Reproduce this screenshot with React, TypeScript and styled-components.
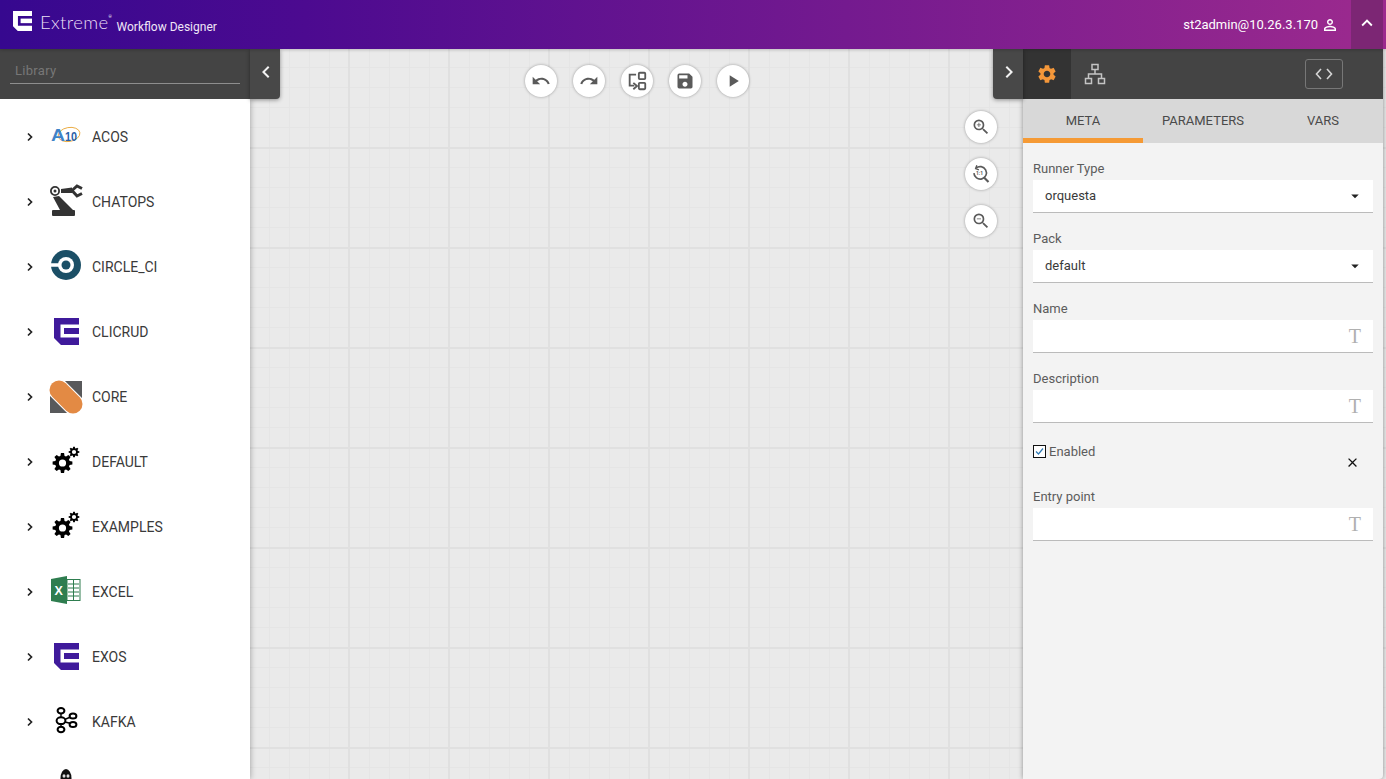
import React from 'react';
import styled, { createGlobalStyle } from 'styled-components';
import {
  MdArrowDropDown,
  MdChevronLeft,
  MdChevronRight,
  MdClose,
  MdExpandLess,
  MdPersonOutline,
  MdPlayArrow,
  MdRedo,
  MdSave,
  MdSettings,
  MdUndo,
  MdZoomIn,
  MdZoomOut,
} from 'react-icons/md';

const GlobalStyle = createGlobalStyle`
  html, body {
    margin: 0;
    height: 100%;
    overflow: hidden;
    font-family: Roboto, "Liberation Sans", sans-serif;
  }
  * { box-sizing: border-box; }
`;

const Page = styled.div`
  display: flex;
  flex-direction: column;
  height: 100vh;
  overflow: hidden;
`;

const Header = styled.header`
  position: relative;
  z-index: 5;
  flex: 0 0 49px;
  display: flex;
  align-items: center;
  padding: 0 3px 0 13px;
  color: #fff;
  background: linear-gradient(90deg, #36088f 0%, #4c0a90 22%, #9c2a8e 100%);
  box-shadow: 0 1px 3px rgba(0, 0, 0, 0.2);
`;

const Brand = styled.div`
  display: flex;
  align-items: flex-start;
  flex: 1;
  height: 21px;
  margin-top: -7px;
`;

const BrandName = styled.span`
  margin-left: 8px;
  font-family: Lato, sans-serif;
  font-size: 18.5px;
  font-weight: 300;
  line-height: 22px;
  letter-spacing: 0.35px;
  color: #eadff5;
`;

const BrandMark = styled.sup`
  margin-top: 4px;
  font-size: 4px;
  line-height: 4px;
`;

const AppName = styled.span`
  margin: 8px 0 0 5px;
  font-size: 12px;
  line-height: 17px;
  color: #f0e6f6;
  white-space: nowrap;
`;

const User = styled.div`
  display: flex;
  align-items: center;
  gap: 3px;
  margin-right: 12px;
  font-size: 13px;
  color: #fff;
  svg { font-size: 18px; }
`;

const Collapse = styled.button`
  display: flex;
  align-items: center;
  justify-content: center;
  width: 32px;
  height: 49px;
  padding: 0 0 4px;
  border: 0;
  color: #fff;
  font-size: 22px;
  background: #7c2674;
`;

const Workspace = styled.main`
  flex: 1;
  min-height: 0;
  display: flex;
  background-color: #eaeaea;
  background-image:
    linear-gradient(90deg, #e0e0e0 2px, transparent 2px),
    linear-gradient(0deg, #e0e0e0 2px, transparent 2px),
    linear-gradient(90deg, #e5e5e5 1px, transparent 1px),
    linear-gradient(0deg, #e5e5e5 1px, transparent 1px);
  background-size: 100px 100px, 100px 100px, 20px 20px, 20px 20px;
  background-position: 348px 0, 0 0, 349px 0, 0 -1px;
`;

const Library = styled.aside`
  position: relative;
  z-index: 3;
  flex: 0 0 250px;
  display: flex;
  flex-direction: column;
  background: #fff;
  box-shadow: 0 0 6px rgba(0, 0, 0, 0.35);
`;

const LibraryBar = styled.div`
  flex: 0 0 50px;
  padding: 12px 10px 0;
  background: #444;
`;

const Search = styled.div`
  height: 23px;
  padding: 2px 5px 0;
  border-bottom: 1px solid #8e8e8e;
  font-size: 13px;
  line-height: 16px;
  letter-spacing: 0.3px;
  color: #777;
`;

const SideToggle = styled.button<{ $side: 'left' | 'right' }>`
  position: absolute;
  top: 0;
  ${(p) => (p.$side === 'left' ? 'left: 100%;' : 'right: 100%;')}
  display: flex;
  align-items: center;
  justify-content: center;
  width: 30px;
  height: 50px;
  padding: 0 0 4px 2px;
  border: 0;
  border-radius: ${(p) => (p.$side === 'left' ? '0 0 4px 0' : '0 0 0 4px')};
  color: #f2f2f2;
  font-size: 24px;
  background: #484848;
  box-shadow: 0 1px 4px rgba(0, 0, 0, 0.4);
`;

const PackList = styled.ul`
  flex: 1;
  margin: 0;
  padding: 5px 0 0;
  overflow: hidden;
  list-style: none;
`;

const PackRow = styled.li`
  display: flex;
  align-items: center;
  height: 65px;
  padding-left: 25px;
  font-size: 14px;
  color: #3a3a3a;
`;

const Caret = styled.svg`
  flex: 0 0 10px;
  width: 10px;
  height: 10px;
  margin-right: 15px;
`;

const PackIcon = styled.svg`
  flex: 0 0 32px;
  width: 32px;
  height: 32px;
  margin-right: 10px;
  overflow: visible;
`;

const MarkBox = styled.span`
  flex: 0 0 32px;
  display: flex;
  justify-content: center;
  height: 27px;
  margin-right: 10px;
`;

const Canvas = styled.section`
  flex: 1;
  display: flex;
  flex-direction: column;
  padding: 16px 26px;
`;

const Toolbar = styled.div`
  display: flex;
  justify-content: center;
  gap: 16px;
`;

const ZoomStack = styled.div`
  display: flex;
  flex-direction: column;
  align-self: flex-end;
  gap: 15px;
  margin-top: 14px;
`;

const RoundButton = styled.button`
  display: flex;
  align-items: center;
  justify-content: center;
  width: 32px;
  height: 32px;
  padding: 0;
  border: 0;
  border-radius: 50%;
  color: #5a5a5a;
  font-size: 20px;
  background: #fff;
  box-shadow: 0 0 3px rgba(0, 0, 0, 0.35);
`;

const Inspector = styled.aside`
  position: relative;
  z-index: 3;
  flex: 0 0 360px;
  display: flex;
  flex-direction: column;
  margin-right: 3px;
  border-bottom-right-radius: 4px;
  background: #f3f3f3;
  box-shadow: 0 0 5px rgba(0, 0, 0, 0.4);
`;

const InspectorBar = styled.div`
  flex: 0 0 50px;
  display: flex;
  align-items: stretch;
  padding-right: 40px;
  background: #444;
`;

const BarTab = styled.div<{ $active?: boolean }>`
  display: flex;
  align-items: center;
  justify-content: center;
  width: 48px;
  color: ${(p) => (p.$active ? '#f4973a' : '#c4c4c4')};
  font-size: 22px;
  background: ${(p) => (p.$active ? '#333' : 'transparent')};
`;

const CodeButton = styled.button`
  display: flex;
  align-items: center;
  justify-content: center;
  align-self: center;
  width: 38px;
  height: 30px;
  margin-left: auto;
  padding: 0;
  border: 1px solid #777;
  border-radius: 3px;
  background: transparent;
`;

const Tabs = styled.div`
  flex: 0 0 44px;
  display: flex;
  background: #d8d8d8;
`;

const Tab = styled.div<{ $active?: boolean }>`
  flex: 0 0 120px;
  padding-top: 14px;
  border-bottom: 5px solid ${(p) => (p.$active ? '#f59a35' : 'transparent')};
  font-size: 13px;
  line-height: 16px;
  text-align: center;
  color: #4a4a4a;
`;

const Form = styled.form`
  flex: 1;
  display: flex;
  flex-direction: column;
  gap: 15px;
  padding: 15px 10px;
`;

const Label = styled.div`
  height: 22px;
  font-size: 13px;
  line-height: 22px;
  color: #5c5c5c;
`;

const Field = styled.div`
  display: flex;
  align-items: center;
  justify-content: space-between;
  height: 33px;
  padding: 0 12px 1px;
  border-bottom: 1px solid #bbb;
  font-size: 13px;
  color: #3a3a3a;
  background: #fff;
  svg { margin-right: -3px; font-size: 18px; color: #222; }
`;

const TextMark = styled.span`
  font-family: "Liberation Serif", serif;
  font-size: 20px;
  line-height: 1;
  color: #b0b0b0;
`;

const ToggleRow = styled.div`
  display: flex;
  justify-content: space-between;
  height: 33px;
  padding-top: 4px;
`;

const CheckLabel = styled.label`
  display: flex;
  align-items: center;
  gap: 3px;
  height: 18px;
  font-size: 13px;
  color: #5c5c5c;
`;

const CheckBox = styled.svg`
  width: 13px;
  height: 13px;
`;

const RemoveIcon = styled.span`
  align-self: flex-end;
  display: flex;
  margin: 0 13px 1px 0;
  font-size: 15px;
  color: #111;
`;

const ExtremeMark = ({ fill, size }: { fill: string; size: number }) => (
  <svg width={size} height={size * 1.08} viewBox="0 0 25 27" fill={fill}>
    <polygon points="0,0 25,0 25,6.500 6.500,6.500 6.500,19.500 25,19.500 25,27 7,27 0,20" />
    <rect x="10" y="10" width="15" height="6" />
  </svg>
);

const gearPoints = (cx: number, cy: number, r: number, teeth: number) => {
  const pts: string[] = [];
  const step = (Math.PI * 2) / teeth;
  for (let i = 0; i < teeth; i++) {
    const a = i * step;
    const offs = [
      [-0.36, 0.74],
      [-0.2, 1],
      [0.2, 1],
      [0.36, 0.74],
    ];
    offs.forEach(([o, k]) => {
      const ang = a + o * step;
      pts.push(`${(cx + Math.cos(ang) * r * k).toFixed(2)} ${(cy + Math.sin(ang) * r * k).toFixed(2)}`);
    });
  }
  return `M${pts.join('L')}Z`;
};

const ringPath = (cx: number, cy: number, r: number) =>
  `M${cx - r} ${cy}a${r} ${r} 0 1 0 ${r * 2} 0a${r} ${r} 0 1 0 ${-r * 2} 0Z`;

const GearsIcon = () => (
  <PackIcon viewBox="0 0 32 32">
    <path fillRule="evenodd" d={gearPoints(12.5, 17, 10, 8) + ringPath(12.5, 17, 3.6)} fill="#000" />
    <path fillRule="evenodd" d={gearPoints(24, 6, 5.4, 8) + ringPath(24, 6, 2.1)} fill="#000" />
  </PackIcon>
);

const packIcons: Record<string, React.ReactNode> = {
  ACOS: (
    <PackIcon viewBox="0 0 32 32">
      <ellipse cx="19" cy="13.5" rx="11" ry="7" fill="none" stroke="#e9a93c" strokeWidth="0.9" transform="rotate(-10 19 13.5)" />
      <text x="1" y="20" textLength="14" lengthAdjust="spacingAndGlyphs" fontFamily="Liberation Sans, sans-serif" fontWeight="700" fontSize="16" fill="#3f83c8">A</text>
      <text x="15" y="19.500" textLength="12" lengthAdjust="spacingAndGlyphs" fontFamily="Liberation Sans, sans-serif" fontWeight="700" fontSize="12.500" fill="#2a5fa8">10</text>
    </PackIcon>
  ),
  CHATOPS: (
    <PackIcon viewBox="0 0 32 32">
      <circle cx="5" cy="5" r="4.100" fill="none" stroke="#333" strokeWidth="1.800" />
      <circle cx="5" cy="5" r="1.500" fill="#333" />
      <path d="M3 11l6-1 14 14H10z" fill="#333" />
      <rect x="2" y="24" width="23" height="6" rx="1" fill="#333" />
      <path d="M11 3l11-1.500V7L11 7z" fill="#333" />
      <path d="M22 4.500L27 0l5 2.500M22 4.500l5 5.500 5-2.500" fill="none" stroke="#333" strokeWidth="3" />
    </PackIcon>
  ),
  CIRCLE_CI: (
    <PackIcon viewBox="0 0 32 32">
      <circle cx="16" cy="14" r="15" fill="#1b4f66" />
      <circle cx="16" cy="14" r="8" fill="#fff" />
      <rect x="0" y="12.250" width="10" height="3.500" fill="#fff" />
      <circle cx="16" cy="14" r="4.500" fill="#1b4f66" />
    </PackIcon>
  ),
  CORE: (
    <PackIcon viewBox="0 0 32 32">
      <rect width="32" height="32" fill="#58595b" />
      <path d="M-2 -2L34 34" stroke="#fff" strokeWidth="21" />
      <path d="M9 9L23 23" stroke="#e38a44" strokeWidth="19" strokeLinecap="round" />
    </PackIcon>
  ),
  EXCEL: (
    <PackIcon viewBox="0 0 32 32">
      <rect x="17" y="3.500" width="13" height="21" fill="#fff" stroke="#2e7d4f" strokeWidth="1" />
      <path d="M18 8h11M18 12h11M18 16h11M18 20h11M23.500 4v20" stroke="#2e7d4f" strokeWidth="1" />
      <polygon points="1,3 17,0 17,28 1,25" fill="#2e7d4f" />
      <text x="4.500" y="19" fontFamily="Liberation Sans, sans-serif" fontWeight="700" fontSize="12.500" fill="#fff">X</text>
    </PackIcon>
  ),
  KAFKA: (
    <PackIcon viewBox="0 0 32 32">
      <path d="M11 5V23M11 15L23 10M11 15L23 18" stroke="#000" strokeWidth="1.400" />
      <g fill="#fff" stroke="#000" strokeWidth="2">
        <ellipse cx="11" cy="4.700" rx="3.400" ry="2.800" />
        <ellipse cx="11" cy="14.700" rx="4.400" ry="3.400" />
        <ellipse cx="11" cy="23.500" rx="3.400" ry="2.800" />
        <ellipse cx="23" cy="10" rx="3.400" ry="2.600" />
        <ellipse cx="23" cy="18.500" rx="3.400" ry="2.600" />
      </g>
    </PackIcon>
  ),
  LINUX: (
    <PackIcon viewBox="0 0 32 32">
      <ellipse cx="16" cy="7" rx="5.500" ry="9" fill="#111" />
      <ellipse cx="14" cy="5" rx="1.500" ry="1.800" fill="#ddd" />
      <ellipse cx="18" cy="5" rx="1.500" ry="1.800" fill="#ddd" />
    </PackIcon>
  ),
};

const ExtremePackIcon = () => (
  <MarkBox>
    <ExtremeMark fill="#3f1a9b" size={25} />
  </MarkBox>
);

// last row is cut by the window, only the top of its icon shows
const packs = [
  { name: 'ACOS', label: 'ACOS' },
  { name: 'CHATOPS', label: 'CHATOPS' },
  { name: 'CIRCLE_CI', label: 'CIRCLE_CI' },
  { name: 'CLICRUD', label: 'CLICRUD' },
  { name: 'CORE', label: 'CORE' },
  { name: 'DEFAULT', label: 'DEFAULT' },
  { name: 'EXAMPLES', label: 'EXAMPLES' },
  { name: 'EXCEL', label: 'EXCEL' },
  { name: 'EXOS', label: 'EXOS' },
  { name: 'KAFKA', label: 'KAFKA' },
  { name: 'LINUX', label: '' },
];

const iconFor = (name: string) => {
  if (name === 'CLICRUD' || name === 'EXOS') return <ExtremePackIcon />;
  if (name === 'DEFAULT' || name === 'EXAMPLES') return <GearsIcon />;
  return packIcons[name];
};

const LayoutIcon = () => (
  <svg width="22" height="22" viewBox="0 0 24 24" fill="none" stroke="#5a5a5a" strokeWidth="2">
    <rect x="14" y="3" width="7" height="7" rx="1" />
    <rect x="14" y="14" width="7" height="7" rx="1" />
    <path d="M11 5H4v12h5" />
    <path d="M8 14l4 3.500L8 21" />
  </svg>
);

const ResetZoomIcon = () => (
  <svg width="20" height="20" viewBox="0 0 24 24" fill="none" stroke="#5a5a5a" strokeWidth="2">
    <path d="M6 5a7.500 7.500 0 1 1-2.500 6" />
    <path d="M7 1.500L5.500 5.500l4 1.500" strokeWidth="1.600" />
    <path d="M15 15.500l6 6" strokeWidth="2.600" />
    <text x="6" y="13" fontSize="6" fontWeight="700" fill="#5a5a5a" stroke="none" fontFamily="Roboto, sans-serif">1:1</text>
  </svg>
);

const HierarchyIcon = () => (
  <svg width="22" height="22" viewBox="0 0 22 22" fill="none" stroke="#c4c4c4" strokeWidth="1.500">
    <rect x="8" y="1.500" width="6" height="5" />
    <rect x="1.500" y="15.500" width="6" height="5" />
    <rect x="14.500" y="15.500" width="6" height="5" />
    <path d="M11 6.500V11M4.500 15.500V11h13v4.500" />
  </svg>
);

const CodeIcon = () => (
  <svg width="18" height="12" viewBox="0 0 18 12" fill="none" stroke="#d4d4d4" strokeWidth="1.600">
    <path d="M6 1L1.500 6 6 11M12 1l4.500 5L12 11" />
  </svg>
);

const fields = ['Name', 'Description'];

const App = () => (
  <Page>
    <GlobalStyle />
    <Header>
      <Brand>
        <ExtremeMark fill="#fff" size={19} />
        <BrandName>Extreme</BrandName>
        <BrandMark>®</BrandMark>
        <AppName>Workflow Designer</AppName>
      </Brand>
      <User>
        st2admin@10.26.3.170
        <MdPersonOutline />
      </User>
      <Collapse>
        <MdExpandLess />
      </Collapse>
    </Header>
    <Workspace>
      <Library>
        <LibraryBar>
          <Search>Library</Search>
        </LibraryBar>
        <SideToggle $side="left">
          <MdChevronLeft />
        </SideToggle>
        <PackList>
          {packs.map(({ name, label }) => (
            <PackRow key={name}>
              <Caret viewBox="0 0 10 10" fill="none" stroke="#222" strokeWidth="1.700">
                <path d="M3 1.500L6.500 5 3 8.500" />
              </Caret>
              {iconFor(name)}
              {label}
            </PackRow>
          ))}
        </PackList>
      </Library>
      <Canvas>
        <Toolbar>
          <RoundButton><MdUndo /></RoundButton>
          <RoundButton><MdRedo /></RoundButton>
          <RoundButton><LayoutIcon /></RoundButton>
          <RoundButton><MdSave /></RoundButton>
          <RoundButton><MdPlayArrow /></RoundButton>
        </Toolbar>
        <ZoomStack>
          <RoundButton><MdZoomIn /></RoundButton>
          <RoundButton><ResetZoomIcon /></RoundButton>
          <RoundButton><MdZoomOut /></RoundButton>
        </ZoomStack>
      </Canvas>
      <Inspector>
        <SideToggle $side="right">
          <MdChevronRight />
        </SideToggle>
        <InspectorBar>
          <BarTab $active><MdSettings /></BarTab>
          <BarTab><HierarchyIcon /></BarTab>
          <CodeButton><CodeIcon /></CodeButton>
        </InspectorBar>
        <Tabs>
          <Tab $active>META</Tab>
          <Tab>PARAMETERS</Tab>
          <Tab>VARS</Tab>
        </Tabs>
        <Form>
          <div>
            <Label>Runner Type</Label>
            <Field>orquesta<MdArrowDropDown /></Field>
          </div>
          <div>
            <Label>Pack</Label>
            <Field>default<MdArrowDropDown /></Field>
          </div>
          {fields.map((f) => (
            <div key={f}>
              <Label>{f}</Label>
              <Field><span /><TextMark>T</TextMark></Field>
            </div>
          ))}
          <ToggleRow>
            <CheckLabel>
              <CheckBox viewBox="0 0 13 13">
                <rect x="0.500" y="0.500" width="12" height="12" fill="#fff" stroke="#111" />
                <path d="M3 6.500l2.500 2.500L10 3.500" fill="none" stroke="#2f7ab5" strokeWidth="1.200" />
              </CheckBox>
              Enabled
            </CheckLabel>
            <RemoveIcon><MdClose /></RemoveIcon>
          </ToggleRow>
          <div>
            <Label>Entry point</Label>
            <Field><span /><TextMark>T</TextMark></Field>
          </div>
        </Form>
      </Inspector>
    </Workspace>
  </Page>
);

export default App;
